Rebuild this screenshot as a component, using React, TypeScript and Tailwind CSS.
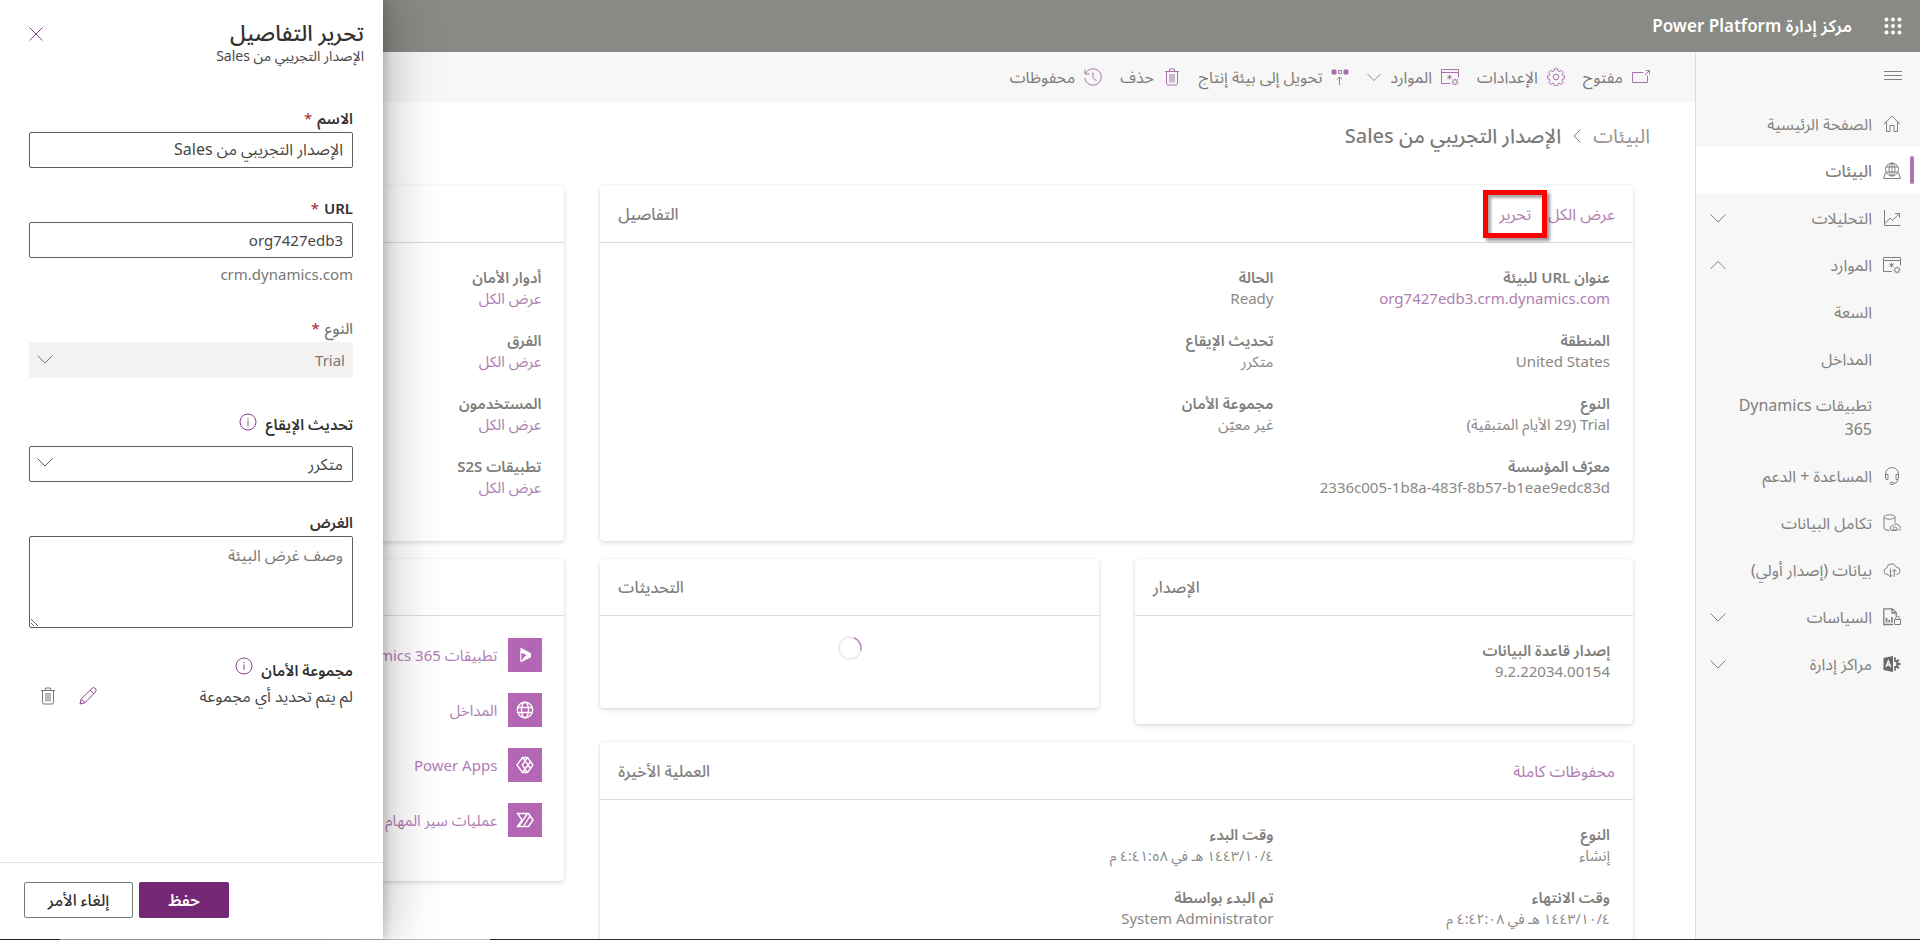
import type { ReactNode } from "react";

type IconProps = { className?: string };

function Svg({ className = "", box = 18, children }: IconProps & { box?: number; children: ReactNode }) {
  return (
    <svg
      aria-hidden="true"
      viewBox={`0 0 ${box} ${box}`}
      fill="none"
      stroke="currentColor"
      strokeWidth="1"
      className={`shrink-0 ${className}`}
    >
      {children}
    </svg>
  );
}

const CloseIcon = () => (
  <Svg className="size-[14px]" box={14}>
    <path d="M.5.5l13 13M13.5.5l-13 13" />
  </Svg>
);
const ChevronDown = ({ className = "size-4" }: IconProps) => (
  <Svg className={className} box={16}>
    <path d="M.5 4.5L8 12l7.500-7.500" />
  </Svg>
);
const ChevronUp = ({ className = "size-4" }: IconProps) => (
  <Svg className={className} box={16}>
    <path d="M.5 12L8 4.500l7.500 7.500" />
  </Svg>
);
const ChevronLeft = () => (
  <Svg className="size-4" box={16}>
    <path d="M11.500 1.500L5 8l6.500 6.500" />
  </Svg>
);
const WaffleIcon = () => (
  <Svg className="size-[18px]">
    {[2.5, 9, 15.5].map((y) =>
      [2.5, 9, 15.5].map((x) => <circle key={`${x}-${y}`} cx={x} cy={y} r="2" fill="currentColor" stroke="none" />),
    )}
  </Svg>
);
const MenuIcon = () => (
  <Svg className="size-[18px]">
    <path d="M0 4.500h18M0 8.500h18M0 12.500h18" />
  </Svg>
);
const InfoIcon = () => (
  <Svg className="size-[18px]">
    <circle cx="9" cy="9" r="8" />
    <path d="M9 7.500v5.500M9 5v1.300" />
  </Svg>
);
const TrashIcon = () => (
  <Svg className="size-[18px]">
    <path d="M2 3.500h14M6.500 3.500V1h5v2.500M3.500 3.500v12q0 1.500 1.500 1.500h8q1.500 0 1.500-1.500v-12M7 6v8.500M9 6v8.500M11 6v8.500" />
  </Svg>
);
const PencilIcon = () => (
  <Svg className="size-[18px]">
    <path d="M1 17l1.200-5L12.800 1.500a2.300 2.300 0 0 1 3.600 3.500L6 15.700zM2.200 12l3.800 3.700M11.200 3l3.700 3.600" />
  </Svg>
);
const OpenIcon = () => (
  <Svg className="size-[18px]">
    <path d="M11.500 4.500H.500v10h15V7.500M13 7l4-4M13.800 2.500h3.700v3.700" />
  </Svg>
);
const GearIcon = () => (
  <Svg className="size-[18px]">
    <circle cx="9" cy="9" r="2.800" />
    <path d="M7.500.800h3l.5 2.200 1.300.500 2-1.200 2 2-1.200 2 .5 1.300 2 .4v2.600l-2 .500-.5 1.400 1.200 1.900-2 2-2-1.200-1.300.5-.5 2.100h-3l-.500-2.100-1.300-.5-2 1.200-2-2 1.200-1.900-.5-1.400-2-.5V8l2-.4.500-1.300-1.200-2 2-2 2 1.200 1.300-.500z" />
  </Svg>
);
const ResourcesIcon = () => (
  <Svg className="size-[18px]">
    <path d="M9 15.500H.500v-14h17v8M.500 4.500h17" />
    <circle cx="14" cy="14" r="2.300" />
    <path d="M14 10.500v1.200M14 16.300v1.200M10.500 14h1.200M16.300 14h1.200M11.500 11.500l.9.900M15.600 15.600l.9.900M16.500 11.500l-.9.900M12.400 15.600l-.9.900M8.500 6.800v4.700M6.400 8l4.200 2.400M10.600 8L6.400 10.400" />
  </Svg>
);
const ConvertIcon = () => (
  <Svg className="size-[18px]">
    <path d="M1 2h4v4H1zM13 2h4v4h-4z" fill="currentColor" />
    <path d="M7.500 2.500h3v3h-3zM8.500 17V9M6 11.500L8.500 9l2.500 2.500" />
  </Svg>
);
const HistoryIcon = () => (
  <Svg className="size-[18px]">
    <path d="M1 1.500v4.500h4.500M1.500 5.800A8.200 8.200 0 1 1 .900 10M9 4.500v5l3.500 3.500" />
  </Svg>
);
const HomeIcon = () => (
  <Svg className="size-[18px]">
    <path d="M.800 9.300L9 1.200l8.200 8.100M3.500 7v9.500h3.500v-6h4v6h3.500V7" />
  </Svg>
);
const EnvironmentIcon = () => (
  <Svg className="size-[18px]">
    <circle cx="9" cy="7.500" r="6.500" />
    <ellipse cx="9" cy="7.500" rx="3" ry="6.500" />
    <path d="M3.200 5h11.600M3.200 10h11.600M9 1v13" />
    <path d="M2.500 10.500L.500 16.500h17l-2-6" />
  </Svg>
);
const ChartIcon = () => (
  <Svg className="size-[18px]">
    <path d="M1.500 1v15.500h16M2 14.500l5-5.500 2.500 2.500L16 4.800M12 4.500h4.500V9" />
  </Svg>
);
const SupportIcon = () => (
  <Svg className="size-[18px]">
    <path d="M2.500 8V7a6.500 6.500 0 0 1 13 0v1M2.500 7.500h2.500v5H4q-1.500 0-1.500-1.500zM15.500 7.500H13v5h1q1.500 0 1.500-1.500zM15 12.500q-.5 3.500-4 4" />
    <ellipse cx="9" cy="16.300" rx="2" ry="1.200" />
  </Svg>
);
const DataLinkIcon = () => (
  <Svg className="size-[18px]">
    <ellipse cx="6.500" cy="3" rx="5.500" ry="2.200" />
    <path d="M1 3v11.500Q2.500 16.500 6.500 16.500M12 3v5.500M13.500 14.500a1.700 1.700 0 1 1-1.700-1.700q1.200 0 2.500 1.700t2 1.500a1.800 1.800 0 0 0 0-3.700q-.3-2.400-3-2.400t-3.500 1.800q-2.700.3-2.700 2.500t3 2.300h4" />
  </Svg>
);
const CloudIcon = () => (
  <Svg className="size-[18px]">
    <path d="M5.500 13.500H4a3.300 3.300 0 0 1-.3-6.500 5 5 0 0 1 9.600-1A3.800 3.800 0 0 1 14 13.500h-.500M7.500 7.500V16M5.500 14l2 2 2-2M11.300 16V8.500M9.300 10.500l2-2 2 2" />
  </Svg>
);
const PolicyIcon = () => (
  <Svg className="size-[18px]">
    <path d="M10 16.500H.800V.800h8.500l4 4v3M9 1v4h4" strokeWidth="1.300" />
    <path d="M3.500 10v4.500M6.200 12v2.500M9 9v5.500" strokeWidth="1.800" />
    <path d="M11.500 11.500h6v5h-6zM12.700 11.500V10a1.800 1.800 0 0 1 3.600 0v1.500" />
  </Svg>
);
const AdminIcon = () => (
  <Svg className="size-[18px]">
    <path d="M.500 3L10 1v16L.500 15z" fill="#6b6967" stroke="none" />
    <path d="M3 12l2.300-6L7.700 12M3.800 10h3" stroke="#f7f7f7" strokeWidth="1.400" />
    <g stroke="#6b6967">
      <path d="M11 5.500a3.500 3.500 0 0 1 0 7" strokeWidth="2" />
      <path d="M12 4.500V2.600M14.300 6.200l1.500-1.500M15 9h2.500M14.300 11.800l1.500 1.500M12 13.500v1.900" strokeWidth="2" />
    </g>
  </Svg>
);

const DynamicsGlyph = () => (
  <Svg className="size-[18px]">
    <path d="M4.500 1.500L15 7.200v4L4.500 16.500l3.200-5L10.500 9 4.500 6.500z" fill="currentColor" stroke="none" />
    <path d="M4.800 5.500v10" strokeWidth="1.200" />
  </Svg>
);
const GlobeGlyph = () => (
  <Svg className="size-[18px]">
    <circle cx="9" cy="9" r="7.700" strokeWidth="1.400" />
    <ellipse cx="9" cy="9" rx="3.500" ry="7.700" strokeWidth="1.400" />
    <path d="M1.800 6.500h14.400M1.800 11.500h14.400" strokeWidth="1.400" />
  </Svg>
);
const PowerAppsGlyph = () => (
  <Svg className="size-[18px]">
    <path d="M6.500 1.500h5L17 9l-5.500 7.500h-5L1 9zM6.500 1.500L14.200 12M6.500 16.500L14.200 6M11.500 1.500L6.300 9l5.200 7.500" strokeWidth="1.400" />
  </Svg>
);
const FlowGlyph = () => (
  <Svg className="size-[18px]">
    <path d="M1.500 2.500h11L17 9l-4.500 6.500h-11L6 9zM3 15l8.500-12.500M7.500 15.500L14 5" strokeWidth="1.400" />
  </Svg>
);

type NavItem = { label: string; icon?: ReactNode; active?: boolean; chevron?: "up" | "down" };

const navItems: NavItem[] = [
  { label: "الصفحة الرئيسية", icon: <HomeIcon /> },
  { label: "البيئات", icon: <EnvironmentIcon />, active: true },
  { label: "التحليلات", icon: <ChartIcon />, chevron: "down" },
  { label: "الموارد", icon: <ResourcesIcon />, chevron: "up" },
  { label: "السعة" },
  { label: "المداخل" },
  { label: "تطبيقات Dynamics 365" },
  { label: "المساعدة + الدعم", icon: <SupportIcon /> },
  { label: "تكامل البيانات", icon: <DataLinkIcon /> },
  { label: "بيانات (إصدار أولي)", icon: <CloudIcon /> },
  { label: "السياسات", icon: <PolicyIcon />, chevron: "down" },
  { label: "مراكز إدارة", icon: <AdminIcon />, chevron: "down" },
];

function Sidebar() {
  return (
    <nav className="flex w-[225px] shrink-0 flex-col border-l border-[#dcdcdc] bg-[#f7f7f7] text-[#82807e]">
      <button type="button" aria-label="القائمة" className="flex h-12 items-center px-[18px] py-0">
        <MenuIcon />
      </button>
      <ul>
        {navItems.map((item) => (
          <li key={item.label}>
            <a
              href="#"
              className={`relative flex min-h-[47px] items-center gap-[11px] py-[11px] pl-[14px] pr-[19px] text-[16px] leading-6 ${
                item.active ? "bg-white font-medium" : ""
              }`}
            >
              {item.active && <span className="absolute right-[6px] top-[9px] h-7 w-1 rounded-full bg-[#ab78ad]" />}
              <span className="flex w-[18px] shrink-0">{item.icon}</span>
              <span className="w-[140px]">{item.label}</span>
              {item.chevron && (
                <span className="mr-auto">{item.chevron === "up" ? <ChevronUp /> : <ChevronDown />}</span>
              )}
            </a>
          </li>
        ))}
      </ul>
    </nav>
  );
}

const commands: { label: string; icon: ReactNode; menu?: boolean }[] = [
  { label: "مفتوح", icon: <OpenIcon /> },
  { label: "الإعدادات", icon: <GearIcon /> },
  { label: "الموارد", icon: <ResourcesIcon />, menu: true },
  { label: "تحويل إلى بيئة إنتاج", icon: <ConvertIcon /> },
  { label: "حذف", icon: <TrashIcon /> },
  { label: "محفوظات", icon: <HistoryIcon /> },
];

function CommandBar() {
  return (
    <div className="flex h-[50px] shrink-0 items-center gap-[18px] bg-[#f7f7f7] pr-[45px] text-[16px] text-[#7d7b79]">
      {commands.map((c) => (
        <button key={c.label} type="button" className="flex items-center gap-[9px] whitespace-nowrap">
          <span className="text-[#a873aa]">{c.icon}</span>
          {c.label}
          {c.menu && <ChevronDown className="size-[14px]" />}
        </button>
      ))}
    </div>
  );
}

function Card({ title, links, children }: { title?: string; links?: ReactNode; children: ReactNode }) {
  return (
    <section className="rounded-[4px] bg-white shadow-[0_2px_5px_rgba(0,0,0,0.13),0_0_2px_rgba(0,0,0,0.08)]">
      <header className={`flex items-center border-b border-[#dcdcdc] px-[18px] text-[16px] ${links ? "h-[58px]" : "h-[57px]"}`}>
        {links}
        <h2 className="mr-auto font-medium text-[#82807e]">{title}</h2>
      </header>
      {children}
    </section>
  );
}

type FactProps = { label: string; value: string; link?: boolean; rtlValue?: boolean; small?: boolean };

function Fact({ label, value, link, rtlValue, small }: FactProps) {
  return (
    <div className="whitespace-nowrap text-[15px] leading-[21px]">
      <dt className="font-semibold text-[#807e7c]">{label}</dt>
      <dd className={`text-[#8a8886] ${small ? "text-[14px]" : ""}`}>
        {link ? (
          <a href="#" className="text-[#b07db2]">
            {value}
          </a>
        ) : rtlValue ? (
          value
        ) : (
          <bdi>{value}</bdi>
        )}
      </dd>
    </div>
  );
}

const apps = [
  { label: "تطبيقات Dynamics 365", icon: <DynamicsGlyph /> },
  { label: "المداخل", icon: <GlobeGlyph /> },
  { label: "Power Apps", icon: <PowerAppsGlyph /> },
  { label: "عمليات سير المهام", icon: <FlowGlyph /> },
];

function Dashboard() {
  return (
    <div className="grid grid-cols-[2fr_1fr] items-start gap-9 pl-12 pr-[62px] pt-[15px]">
      <div className="flex flex-col gap-[18px]">
        <Card
          title="التفاصيل"
          links={
            <div className="flex gap-[17px] text-[#b07db2]">
              <a href="#">عرض الكل</a>
              <span className="relative">
                <a href="#">تحرير</a>
                <span className="pointer-events-none absolute -inset-x-4 -inset-y-3 border-[5px] border-[#fe0000] shadow-[3px_3px_3px_rgba(0,0,0,0.4),inset_3px_3px_3px_rgba(0,0,0,0.35)]" />
              </span>
            </div>
          }
        >
          <dl className="grid grid-cols-3 gap-y-[21px] pb-[43px] pr-[23px] pt-6">
            <Fact label="عنوان URL للبيئة" value="org7427edb3.crm.dynamics.com" link />
            <div className="col-span-2">
              <Fact label="الحالة" value="Ready" />
            </div>
            <Fact label="المنطقة" value="United States" />
            <div className="col-span-2">
              <Fact label="تحديث الإيقاع" value="متكرر" />
            </div>
            <Fact label="النوع" value="Trial (29 الأيام المتبقية)" rtlValue />
            <div className="col-span-2">
              <Fact label="مجموعة الأمان" value="غير معيّن" />
            </div>
            <Fact label="معرّف المؤسسة" value="2336c005-1b8a-483f-8b57-b1eae9edc83d" />
          </dl>
        </Card>

        <div className="grid grid-cols-2 items-start gap-9">
          <Card title="الإصدار">
            <dl className="pb-[42px] pr-[23px] pt-6">
              <Fact label="إصدار قاعدة البيانات" value="9.2.22034.00154" />
            </dl>
          </Card>
          <Card title="التحديثات">
            <div className="flex h-[92px] justify-center pt-5">
              <svg role="img" aria-label="جارٍ التحميل" viewBox="0 0 24 24" fill="none" strokeWidth="1.5" className="size-6">
                <circle cx="12" cy="12" r="11" stroke="#f4e3f5" />
                <path d="M15.800 1.700A11 11 0 0 1 22.700 14.500" stroke="#b384b5" />
              </svg>
            </div>
          </Card>
        </div>

        <Card
          title="العملية الأخيرة"
          links={
            <a href="#" className="text-[#b07db2]">
              محفوظات كاملة
            </a>
          }
        >
          <dl className="grid grid-cols-3 gap-y-[21px] pb-[43px] pr-[23px] pt-6">
            <Fact label="النوع" value="إنشاء" />
            <div className="col-span-2">
              <Fact label="وقت البدء" value="١٤٤٣/١٠/٤ هـ في ٤:٤١:٥٨ م" small />
            </div>
            <Fact label="وقت الانتهاء" value="١٤٤٣/١٠/٤ هـ في ٤:٤٢:٠٨ م" small />
            <div className="col-span-2">
              <Fact label="تم البدء بواسطة" value="System Administrator" />
            </div>
          </dl>
        </Card>
      </div>

      <div className="flex flex-col gap-[18px] pt-px">
        <Card>
          <dl className="grid gap-y-[21px] pb-[43px] pr-[23px] pt-6">
            <Fact label="أدوار الأمان" value="عرض الكل" link />
            <Fact label="الفرق" value="عرض الكل" link />
            <Fact label="المستخدمون" value="عرض الكل" link />
            <Fact label="تطبيقات S2S" value="عرض الكل" link />
          </dl>
        </Card>
        <Card>
          <ul className="flex flex-col gap-[21px] pb-11 pr-[22px] pt-[22px]">
            {apps.map((app) => (
              <li key={app.label}>
                <a href="#" className="flex items-center gap-[11px] whitespace-nowrap text-[15px] text-[#b07db2]">
                  <span className="flex size-[34px] items-center justify-center bg-[#b266b4] text-white">{app.icon}</span>
                  {app.label}
                </a>
              </li>
            ))}
          </ul>
        </Card>
      </div>
    </div>
  );
}

const fieldBox = "w-full rounded-[2px] border border-[#605e5c] bg-white px-[9px] text-[#484644]";
const labelText = "text-[15px] leading-5 font-semibold text-[#323130]";

function Required() {
  return <span className="pr-[5px] font-normal text-[#a4262c]">*</span>;
}

function EditPanel() {
  return (
    <aside
      aria-label="تحرير التفاصيل"
      className="absolute inset-y-0 left-0 flex w-[383px] flex-col bg-white shadow-[4px_0_50px_rgba(0,0,0,0.28),1px_0_10px_rgba(0,0,0,0.2)]"
    >
      <header className="flex items-start justify-between pl-[29px] pr-[19px] pt-[17px]">
        <div>
          <h1 className="text-[22px] font-medium leading-[30px] text-[#323130]">تحرير التفاصيل</h1>
          <p className="text-[14px] leading-[18px] text-[#484644]">الإصدار التجريبي من Sales</p>
        </div>
        <button type="button" aria-label="إغلاق" className="mt-[10px] text-[#8a3f8c]">
          <CloseIcon />
        </button>
      </header>

      <form id="edit-environment" className="flex flex-1 flex-col gap-[30px] pl-[29px] pr-[30px] pt-[43px]">
        <div className="flex flex-col gap-1">
          <label htmlFor="name" className={labelText}>
            الاسم
            <Required />
          </label>
          <input id="name" defaultValue="الإصدار التجريبي من Sales" className={`h-9 text-[16px] ${fieldBox}`} />
        </div>

        <div className="flex flex-col gap-1">
          <label htmlFor="url" className={labelText}>
            URL
            <Required />
          </label>
          <input id="url" defaultValue="org7427edb3" className={`h-9 text-[15px] ${fieldBox}`} />
          <p className="pt-[2px] text-[15px] leading-5 text-[#797775]">crm.dynamics.com</p>
        </div>

        <div className="flex flex-col gap-1 pt-1">
          <label htmlFor="type" className="text-[15px] font-medium leading-5 text-[#797775]">
            النوع
            <Required />
          </label>
          <div className="relative text-[#797775]">
            <select id="type" disabled className="h-9 w-full appearance-none rounded-[2px] bg-[#f3f2f1] px-2 text-[15px] opacity-100">
              <option>Trial</option>
            </select>
            <ChevronDown className="pointer-events-none absolute left-2 top-[9px] size-4" />
          </div>
        </div>

        <div className="flex flex-col gap-[6px]">
          <div className="flex h-8 items-center gap-2">
            <label htmlFor="cadence" className={labelText}>
              تحديث الإيقاع
            </label>
            <button type="button" aria-label="معلومات" className="pb-1 text-[#8a3f8c]">
              <InfoIcon />
            </button>
          </div>
          <div className="relative text-[#605e5c]">
            <select id="cadence" className={`h-9 appearance-none text-[16px] ${fieldBox}`}>
              <option>متكرر</option>
            </select>
            <ChevronDown className="pointer-events-none absolute left-2 top-2 size-4" />
          </div>
        </div>

        <div className="flex flex-col gap-1">
          <label htmlFor="purpose" className={labelText}>
            الغرض
          </label>
          <textarea
            id="purpose"
            placeholder="وصف غرض البيئة"
            className={`h-[92px] py-2 text-[16px] leading-5 placeholder:text-[#797775] ${fieldBox}`}
          />
        </div>

        <div className="flex flex-col gap-1">
          <div className="flex h-6 items-center gap-2">
            <h3 className={labelText}>مجموعة الأمان</h3>
            <button type="button" aria-label="معلومات" className="pb-2 text-[#8a3f8c]">
              <InfoIcon />
            </button>
          </div>
          <div className="flex items-center gap-[22px] pl-[10px]">
            <p className="ml-auto text-[16px] leading-5 text-[#484644]">لم يتم تحديد أي مجموعة</p>
            <button type="button" aria-label="تحرير" className="text-[#8a3f8c]">
              <PencilIcon />
            </button>
            <button type="button" aria-label="حذف" className="text-[#797775]">
              <TrashIcon />
            </button>
          </div>
        </div>
      </form>

      <footer className="flex h-[77px] items-start justify-end gap-[6px] border-t border-[#e4e4e4] pl-6 pt-[19px]">
        <button type="submit" form="edit-environment" className="h-9 w-[90px] rounded-[2px] bg-[#742774] text-[16px] font-semibold text-white">
          حفظ
        </button>
        <button type="button" className="h-9 w-[109px] rounded-[2px] border border-[#797775] text-[16px] font-medium text-[#323130]">
          إلغاء الأمر
        </button>
      </footer>
    </aside>
  );
}

export default function App() {
  return (
    <div dir="rtl" className="flex h-screen flex-col overflow-hidden bg-white font-['Noto_Sans','Noto_Sans_Arabic',sans-serif]">
      <div className="relative flex min-h-0 flex-1 flex-col">
        <header className="flex h-[52px] shrink-0 items-center gap-8 bg-[#898986] pr-[18px] text-white">
          <button type="button" aria-label="مشغل التطبيقات">
            <WaffleIcon />
          </button>
          <span className="text-[17px] font-semibold">مركز إدارة Power Platform</span>
        </header>
        <div className="flex min-h-0 flex-1">
          <Sidebar />
          <main className="min-w-0 flex-1 overflow-hidden">
            <CommandBar />
            <div className="flex h-[68px] items-center gap-2 pr-[45px] text-[20px] text-[#7d7b79]">
              <a href="#" className="text-[#979593]">
                البيئات
              </a>
              <ChevronLeft />
              <span className="font-medium">الإصدار التجريبي من Sales</span>
            </div>
            <Dashboard />
          </main>
        </div>
        <EditPanel />
      </div>
      <div className="flex h-px shrink-0 flex-row-reverse">
        <div className="w-[60px] bg-[#1c2f38]" />
        <div className="w-[430px] bg-[#bdbdbd]" />
        <div className="flex-1 bg-[#1c2f38]" />
      </div>
    </div>
  );
}
